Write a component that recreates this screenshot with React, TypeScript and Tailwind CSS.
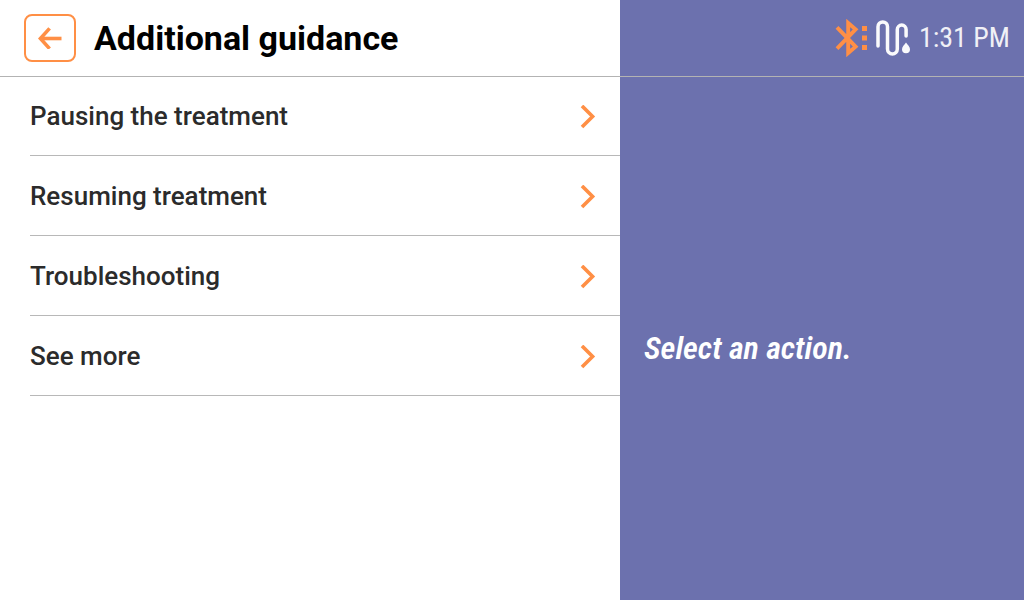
const actions = [
  "Pausing the treatment",
  "Resuming treatment",
  "Troubleshooting",
  "See more",
];

function BackArrow() {
  return (
    <svg viewBox="0 0 24 22" className="h-[22px] w-6" fill="none" stroke="#ff8f45" strokeWidth="3.6" aria-hidden="true">
      <path d="M23.5 11.5H3" />
      <path d="M11.6 1.4 2.4 11.5 11.6 21.6" />
    </svg>
  );
}

function Chevron() {
  return (
    <svg viewBox="0 0 16 24" className="h-6 w-4" fill="none" stroke="#ff8f45" strokeWidth="3.6" aria-hidden="true">
      <path d="M2 .9 12.6 11.5 2 22.1" />
    </svg>
  );
}

function Bluetooth() {
  return (
    <svg viewBox="0 0 34 38" className="h-[38px] w-[34px]" role="img" aria-label="Bluetooth">
      <path
        d="M2 8.4 20.6 27.6 13.2 34V4L20.6 10.4 2 29.6"
        fill="none"
        stroke="#ff8f45"
        strokeWidth="3.9"
      />
      <path d="M27 7h5v5h-5zM27 16.5h5v5h-5zM27 26h5v5h-5z" fill="#ff8f45" />
    </svg>
  );
}

function Tubing() {
  return (
    <svg viewBox="0 0 36 38" className="h-[38px] w-9" role="img" aria-label="Tubing">
      <path
        d="M3 27V7.7a4.75 4.75 0 0 1 9.5 0V30a4.9 4.9 0 0 0 9.8 0V10.5a4.4 4.4 0 0 1 8.8 0V17"
        fill="none"
        stroke="#fafafc"
        strokeWidth="3.5"
        strokeLinecap="round"
      />
      <path d="M31 23.5c1.6 2.3 4 4.4 4 6.8a4 4 0 0 1-8 0c0-2.4 2.4-4.5 4-6.8z" fill="#fafafc" />
    </svg>
  );
}

export default function App() {
  return (
    <div className="flex min-h-screen bg-white font-['Roboto','Liberation_Sans',sans-serif]">
      <main className="flex-1">
        <header className="flex h-19 items-center gap-[18px] pl-6 shadow-[0_1px_0_#b3b3b3]">
          <button
            type="button"
            aria-label="Back"
            className="flex h-12 w-13 items-center justify-center rounded-lg border-[2px] border-[#ff8f45]"
          >
            <BackArrow />
          </button>
          <h1 className="text-[34px] leading-10 font-bold whitespace-nowrap text-black">Additional guidance</h1>
        </header>
        <ul className="pl-[30px]">
          {actions.map((label) => (
            <li key={label} className="border-b border-[#b8b8b8]">
              <button
                type="button"
                className="flex h-[79px] w-full items-center justify-between pt-0.5 pr-6 text-left text-[26px] font-medium text-[#2b2b2b]"
              >
                {label}
                <Chevron />
              </button>
            </li>
          ))}
        </ul>
      </main>
      <aside className="flex w-[404px] shrink-0 flex-col bg-[#6c71ae] font-['Roboto_Condensed','Roboto',sans-serif]">
        <div className="flex h-19 items-center justify-end pr-3.5 shadow-[0_1px_0_#b3b3b3]">
          <Bluetooth />
          <div className="ml-1.5 flex items-center gap-2">
            <Tubing />
            <time className="text-[28px] leading-10 text-[#f0f0f6]">1:31 PM</time>
          </div>
        </div>
        <div className="flex flex-1 items-center px-6 pt-5">
          <p className="text-[32px] leading-10 font-semibold text-white italic">Select an action.</p>
        </div>
      </aside>
    </div>
  );
}
